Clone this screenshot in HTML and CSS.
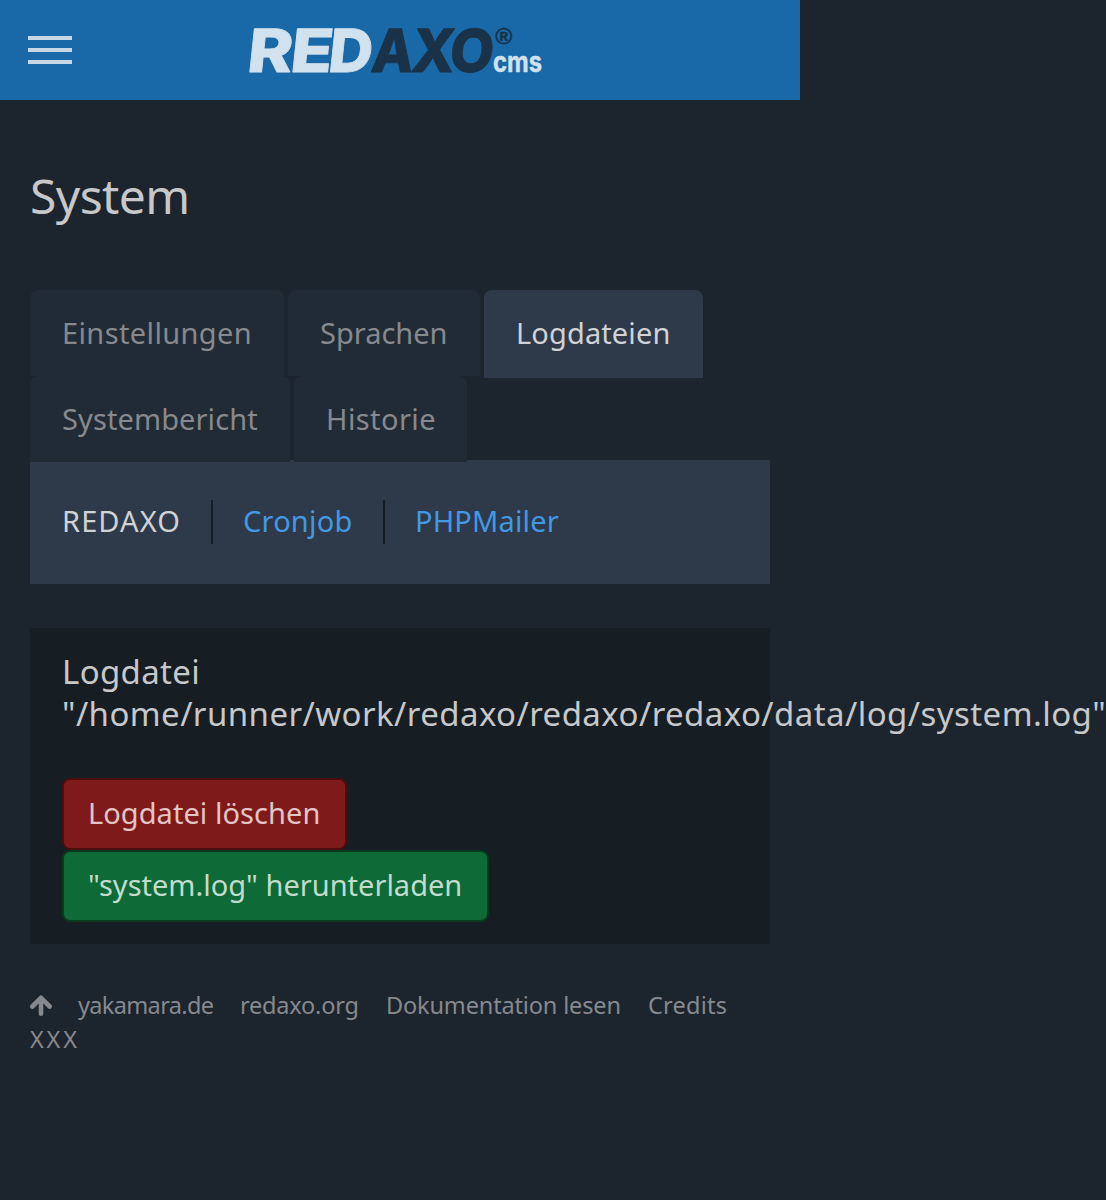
FILE: index.html
```html
<!DOCTYPE html>
<html lang="de">
<head>
<meta charset="utf-8">
<title>System · REDAXO</title>
<link rel="stylesheet" href="styles.css">
</head>
<body>
<div class="page">
  <header class="topbar">
    <button class="menu" aria-label="Menü"><span class="bar"></span><span class="bar"></span><span class="bar"></span></button>
    <svg class="logo" viewBox="0 0 294 46" role="img" aria-label="REDAXO CMS">
      <g class="logo-word" transform="translate(0 43.500) skewX(-6)">
        <text class="light" x="-2" y="0" textLength="45" lengthAdjust="spacingAndGlyphs">R</text>
        <text class="light" x="41" y="0" textLength="42" lengthAdjust="spacingAndGlyphs">E</text>
        <text class="light" x="79" y="0" textLength="44" lengthAdjust="spacingAndGlyphs">D</text>
        <text class="dark" x="122" y="0" textLength="42" lengthAdjust="spacingAndGlyphs">A</text>
        <text class="dark" x="162" y="0" textLength="43" lengthAdjust="spacingAndGlyphs">X</text>
        <text class="dark" x="200" y="0" textLength="44" lengthAdjust="spacingAndGlyphs">O</text>
      </g>
      <text class="logo-reg dark" x="247" y="16" textLength="17" lengthAdjust="spacingAndGlyphs">®</text>
      <text class="logo-cms light" x="245" y="44" textLength="49" lengthAdjust="spacingAndGlyphs">cms</text>
    </svg>
  </header>
  <main class="content">
    <h1 class="title">System</h1>
    <nav class="tabs">
      <a class="tab tab-a">Einstellungen</a>
      <a class="tab tab-b">Sprachen</a>
      <a class="tab tab-c active">Logdateien</a>
      <a class="tab tab-d">Systembericht</a>
      <a class="tab tab-e">Historie</a>
    </nav>
    <nav class="subnav">
      <a class="sub sub-a current">REDAXO</a>
      <a class="sub sub-b">Cronjob</a>
      <a class="sub sub-c">PHPMailer</a>
    </nav>
    <section class="panel">
      <h2 class="panel-title">Logdatei<br><span class="path">"/home/runner/work/redaxo/redaxo/redaxo/data/log/system.log"</span></h2>
      <div class="actions">
        <button class="btn btn-delete">Logdatei löschen</button>
        <button class="btn btn-save">"system.log" herunterladen</button>
      </div>
    </section>
    <footer class="footer">
      <div class="links">
        <svg class="up" viewBox="0 0 22 22"><path d="M2.300 11.500 11 2.800l8.700 8.700M11 4v14.800"/></svg>
        <a class="f-a">yakamara.de</a>
        <a class="f-b">redaxo.org</a>
        <a class="f-c">Dokumentation lesen</a>
        <a class="f-d">Credits</a>
      </div>
      <div class="time">XXX</div>
    </footer>
  </main>
</div>
</body>
</html>
```
FILE: styles.css
```css
* { box-sizing: border-box; }
body {
  margin: 0;
  min-height: 1200px;
  background: #1c242d;
  color: #c7c8ca;
  font-family: "Noto Sans", "Open Sans", sans-serif;
  font-size: 29px;
  overflow: hidden;
}
.page { width: 800px; }
.topbar {
  display: flex;
  align-items: flex-start;
  height: 100px;
  padding: 28px;
  background: #1968a7;
}
.menu {
  display: flex;
  flex-direction: column;
  gap: 8px;
  width: 44px;
  margin: 8px 176px 0 0;
  padding: 0;
  border: 0;
  background: none;
}
.bar { height: 4px; background: #c6d7e5; }
.logo { flex: none; width: 294px; height: 46px; overflow: visible; }
.light { fill: #d1e1ed; stroke: #d1e1ed; }
.dark { fill: #1a3247; stroke: #1a3247; }
.logo-word { font: 800 59.500px Inter, sans-serif; stroke-width: 0.8; stroke-linejoin: round; }
.logo-reg { font: italic 700 22px "Liberation Sans", sans-serif; stroke-width: 0.4; }
.logo-cms { font: 700 28px Inter, sans-serif; stroke-width: 0.4; }
.content { padding: 0 30px; }
.title {
  margin: 0;
  height: 190px;
  padding-top: 63px;
  font-size: 48px;
  line-height: 66px;
  font-weight: 400;
  letter-spacing: -0.6px;
}
.tabs { display: flex; flex-wrap: wrap; column-gap: 4px; height: 170px; }
.tab {
  height: 86px;
  padding: 0 0 0 32px;
  border-radius: 8px 8px 0 0;
  background: #212b35;
  color: #86898d;
  line-height: 86px;
  white-space: nowrap;
}
.tab.active { height: 88px; margin-bottom: -2px; background: #2e3a4a; color: #d0d2d5; }
.tab-a { width: 254px; letter-spacing: 0.38px; }
.tab-b { width: 192px; }
.tab-c { width: 219px; letter-spacing: 0.12px; }
.tab-d { width: 260px; letter-spacing: 0.1px; }
.tab-e { width: 173px; letter-spacing: 0.4px; }
.tab-d, .tab-e { position: relative; }
.subnav {
  display: flex;
  height: 124px;
  padding: 40px 32px;
  background: #2e3a4a;
}
.sub { height: 44px; line-height: 42px; color: #4298e3; white-space: nowrap; }
.sub.current { color: #d0d2d5; }
.sub-a { width: 151px; border-right: 2px solid #151c22; letter-spacing: 1.1px; }
.sub-b { width: 172px; padding-left: 30px; border-right: 2px solid #151c22; letter-spacing: 0.2px; }
.sub-c { padding-left: 30px; letter-spacing: 0.15px; }
.panel {
  height: 316px;
  margin-top: 44px;
  padding: 23px 32px 0;
  background: #161d23;
}
.panel-title {
  margin: 0;
  height: 127px;
  font-size: 33px;
  line-height: 42px;
  font-weight: 400;
  letter-spacing: 0.35px;
  white-space: nowrap;
}
.path { letter-spacing: 0.43px; }
.actions { display: flex; flex-direction: column; align-items: flex-start; }
.btn {
  height: 72px;
  padding: 0 0 4px 24px;
  border: 2px solid;
  border-radius: 8px;
  font: inherit;
  text-align: left;
  white-space: nowrap;
}
.btn-delete { width: 285px; background: #7f1a1a; border-color: #4c0d0f; color: #e1c4c5; letter-spacing: 0.05px; }
.btn-save { width: 427px; background: #0e6a37; border-color: #063a1d; color: #c1dccc; }
.footer { padding-top: 44px; font-size: 23.500px; line-height: 34px; color: #86898d; }
.links { display: flex; height: 34px; white-space: nowrap; }
.up { flex: none; width: 22px; height: 22px; margin: 7px 26px 0 0; fill: none; stroke: currentColor; stroke-width: 4.600; stroke-linecap: round; stroke-linejoin: round; overflow: visible; }
.f-a { width: 162px; letter-spacing: -0.65px; }
.f-b { width: 146px; letter-spacing: -0.2px; }
.f-c { width: 262px; letter-spacing: -0.15px; }
.f-d { letter-spacing: 0.25px; }
.time { letter-spacing: 2.8px; }
```
